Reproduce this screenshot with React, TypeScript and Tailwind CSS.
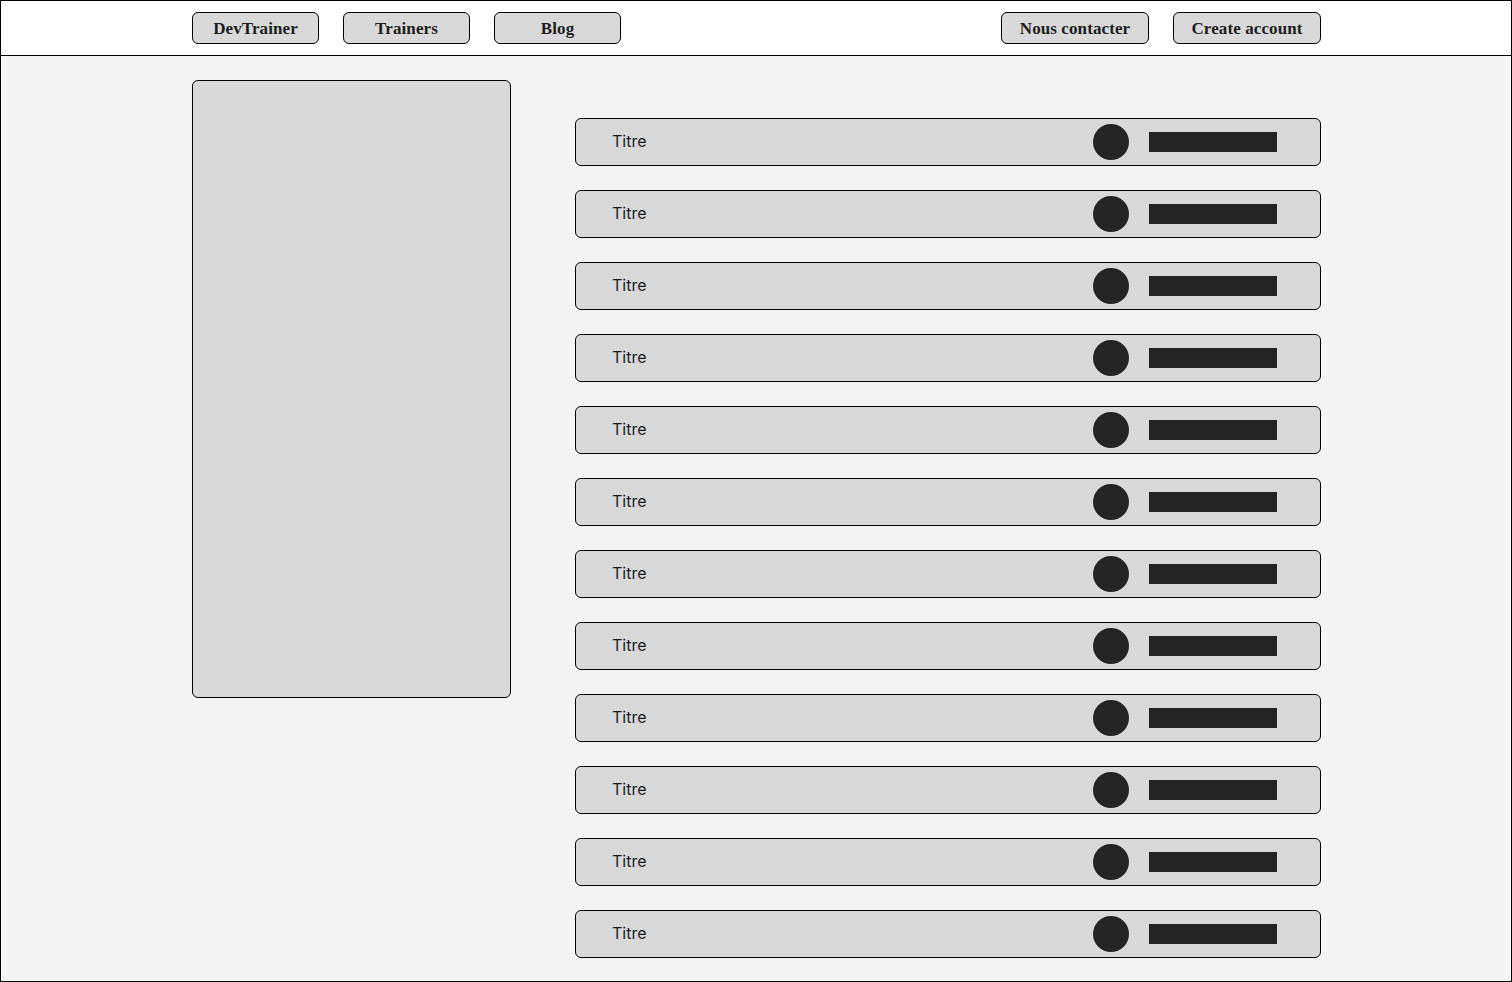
const navLeft = ["DevTrainer", "Trainers", "Blog"]
const navRight = ["Nous contacter", "Create account"]

function NavButton({ label, wide }: { label: string; wide?: boolean }) {
  return (
    <button
      className={`${wide ? "w-[148px]" : "w-[127px]"} h-8 rounded-md border border-black bg-[#d9d9d9] pt-px text-[17px] font-bold tracking-[0.1px] text-[#1e1e1e]`}
      style={{ fontFamily: '"Liberation Serif", serif' }}
    >
      {label}
    </button>
  )
}

function Row() {
  return (
    <div className="flex h-12 items-center rounded-md border border-black bg-[#d9d9d9] pl-[36px] pr-[43px]">
      <span className="mb-[2px] flex-1 text-base text-[#1e1e1e]">Titre</span>
      <div className="h-9 w-9 rounded-full bg-[#242424]" />
      <div className="ml-5 h-5 w-32 bg-[#242424]" />
    </div>
  )
}

export default function App() {
  const rows = Array.from({ length: 12 }, (_, i) => i)
  return (
    <div
      className="flex h-[982px] w-[1512px] flex-col overflow-hidden border border-black bg-[#f4f4f4]"
      style={{ fontFamily: 'Inter, "Liberation Sans", sans-serif' }}
    >
      <header className="flex h-[55px] shrink-0 items-center justify-between border-b border-black bg-white pl-[191px] pr-[190px]">
        <div className="flex gap-6">
          {navLeft.map((l) => (
            <NavButton key={l} label={l} />
          ))}
        </div>
        <div className="flex gap-6">
          {navRight.map((l) => (
            <NavButton key={l} label={l} wide />
          ))}
        </div>
      </header>

      <main className="flex gap-16 pl-[191px] pt-6">
        <aside className="h-[618px] w-[319px] shrink-0 rounded-md border border-black bg-[#d9d9d9]" />
        <section className="mt-[38px] flex w-[746px] flex-col gap-6">
          {rows.map((i) => (
            <Row key={i} />
          ))}
        </section>
      </main>
    </div>
  )
}
